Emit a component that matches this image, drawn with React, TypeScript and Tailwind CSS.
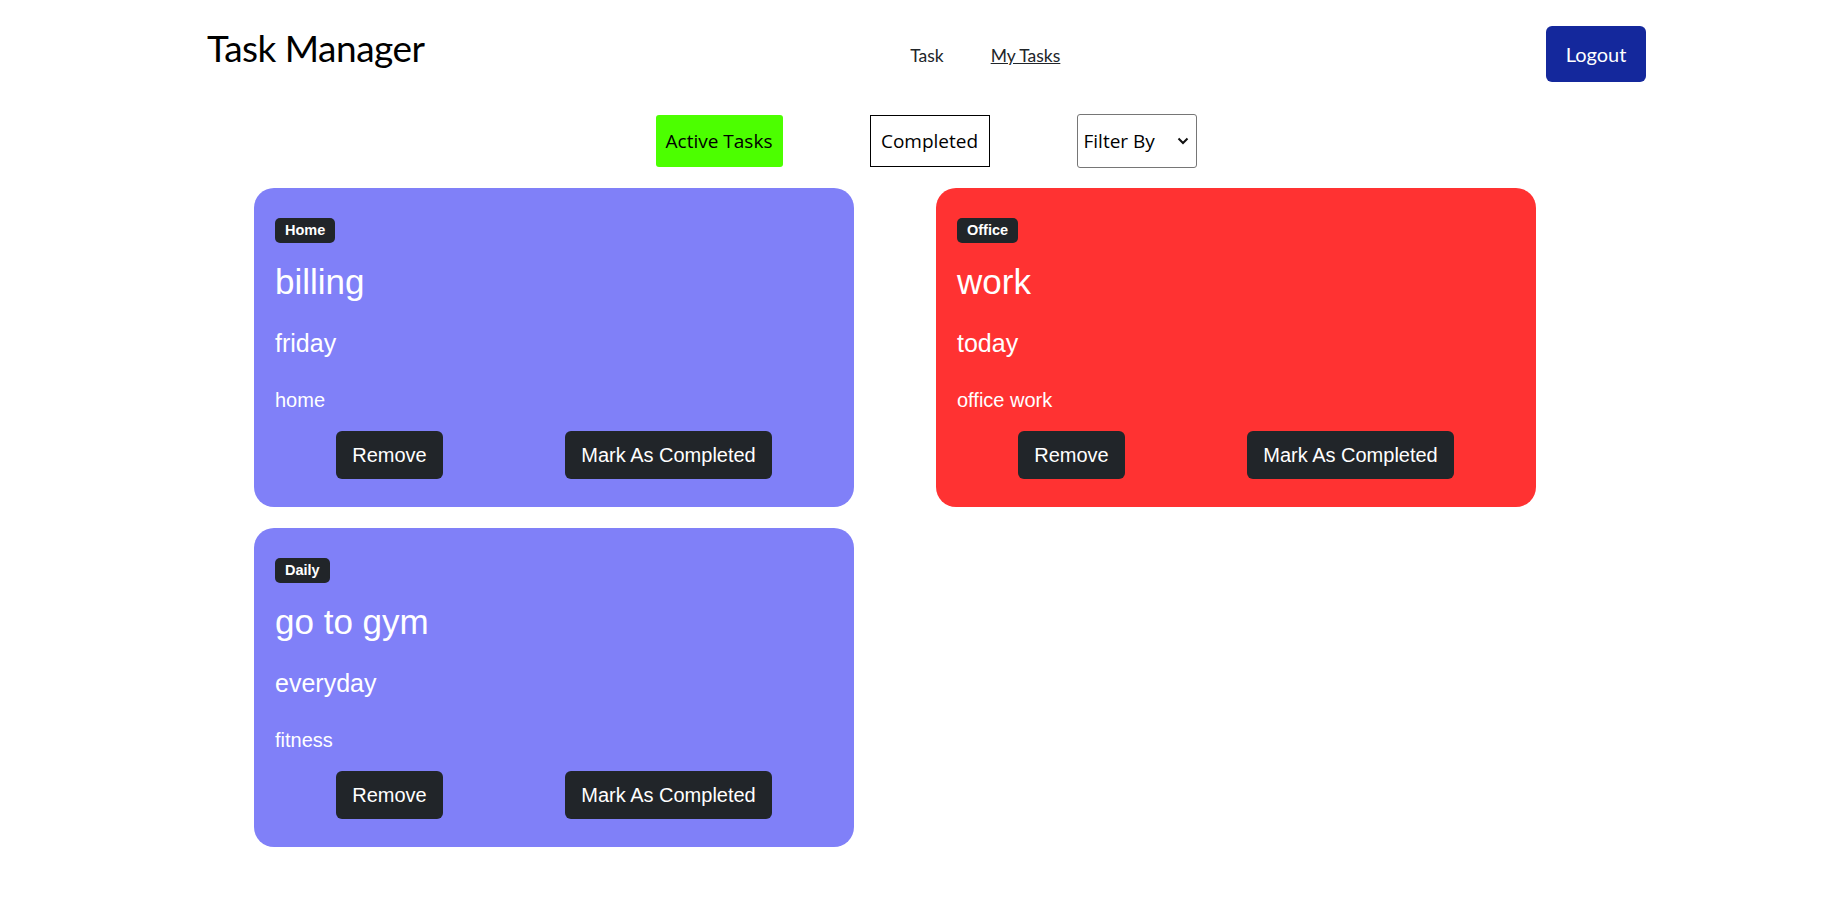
import React from "react";

type Task = { tag: string; title: string; when: string; desc: string; red?: boolean };

const tasks: Task[] = [
  { tag: "Home", title: "billing", when: "friday", desc: "home" },
  { tag: "Office", title: "work", when: "today", desc: "office work", red: true },
  { tag: "Daily", title: "go to gym", when: "everyday", desc: "fitness" },
];

function Card({ t }: { t: Task }) {
  return (
    <div
      className={`${t.red ? "bg-[#ff3232]" : "bg-[#8080f8]"} rounded-[20px] h-[319px] px-[21px] pt-[30px] flex flex-col text-white font-['Liberation_Sans',Arial,sans-serif]`}
    >
      <div className="flex">
        <span className="bg-[#212529] rounded-[5px] px-[10px] py-[5px] text-[14.5px] font-bold leading-none">
          {t.tag}
        </span>
      </div>
      <h2 className="mt-[18px] text-[35px] leading-[42px]">{t.title}</h2>
      <h3 className="mt-[25px] text-[25px] leading-[30px]">{t.when}</h3>
      <p className="mt-[30px] text-[20px] leading-[24px]">{t.desc}</p>
      <div className="mt-[19px] flex justify-around">
        <button className="h-[48px] px-[16px] rounded-[6px] bg-[#212529] text-white text-[20px] leading-[30px]">
          Remove
        </button>
        <button className="h-[48px] px-[16px] rounded-[6px] bg-[#212529] text-white text-[20px] leading-[30px]">
          Mark As Completed
        </button>
      </div>
    </div>
  );
}

export default function App() {
  return (
    <div className="min-h-screen bg-white">
      <header className="flex items-start justify-between pl-[207px] pr-[185px] pt-[25px] font-['Lato',sans-serif]">
        <h1 className="text-[37px] leading-[46px] tracking-[-0.5px] text-black">Task Manager</h1>
        <nav className="flex gap-[47px] mt-[19px] text-[17.5px] leading-[24px] text-[#212529]">
          <a className="cursor-pointer">Task</a>
          <a className="underline cursor-pointer">My Tasks</a>
        </nav>
        <button className="mt-[1px] h-[56px] w-[100px] rounded-[6px] bg-[#14289c] text-white text-[20px]">
          Logout
        </button>
      </header>

      <div className="mt-[32px] flex items-center justify-center gap-[87px] pl-[21px] h-[54px] font-['Open_Sans',sans-serif] text-[19px]">
        <button className="w-[127px] h-[52px] rounded-[3px] bg-[#4cff00] text-black">Active Tasks</button>
        <button className="w-[120px] h-[52px] border border-black bg-white text-black">Completed</button>
        <div className="w-[120px] h-[54px] border border-[#767676] rounded-[3px] flex items-center justify-between pl-[6px] pr-[7px] text-black">
          <span>Filter By</span>
          <svg width="12" height="8" viewBox="0 0 12 8" fill="none">
            <path d="M1.5 1.5 L6 6 L10.5 1.5" stroke="#111" strokeWidth="2" />
          </svg>
        </div>
      </div>

      <div className="mt-[20px] ml-[254px] grid grid-cols-[600px_600px] gap-x-[82px] gap-y-[21px]">
        {tasks.map((t) => (
          <Card key={t.title} t={t} />
        ))}
      </div>
    </div>
  );
}
